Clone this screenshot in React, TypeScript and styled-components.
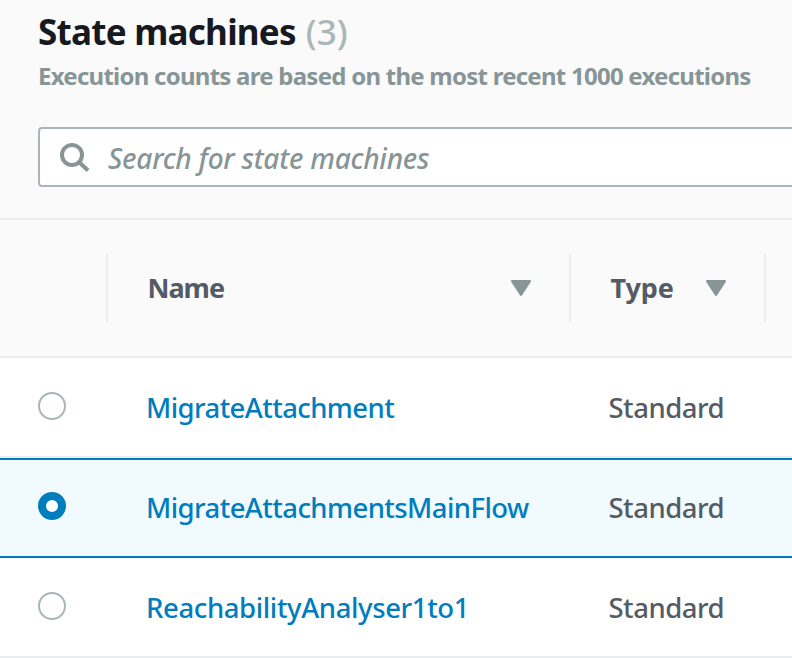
import React, { useState } from 'react';
import styled, { createGlobalStyle } from 'styled-components';

const Global = createGlobalStyle`
  *, *::before, *::after { box-sizing: border-box; }
  body {
    margin: 0;
    background: #fff;
    overflow: hidden;
    font-family: "Noto Sans", "Open Sans", sans-serif;
  }
`;

const Page = styled.main`
  width: 792px;
  height: 658px;
  overflow: hidden;
  color: #545b64;
`;

const Header = styled.header`
  height: 220px;
  padding: 9px 0 0 38px;
  background: #fafafa;
  border-bottom: 2px solid #eaeded;
`;

const Title = styled.h1`
  display: flex;
  gap: 10px;
  margin: 0;
  font-size: 35px;
  line-height: 46px;
  font-weight: 700;
  letter-spacing: -0.74px;
  color: #16191f;
  white-space: nowrap;
`;

const Count = styled.span`
  font-weight: 500;
  letter-spacing: 0;
  color: #aab7b8;
`;

const Description = styled.p`
  margin: 5px 0 0;
  font-size: 24px;
  line-height: 32px;
  font-weight: 700;
  letter-spacing: -0.75px;
  color: #879596;
  white-space: nowrap;
`;

const SearchField = styled.label`
  display: flex;
  align-items: center;
  gap: 18px;
  width: 800px;
  height: 60px;
  margin-top: 35px;
  padding: 2px 0 0 20px;
  background: #fff;
  border: 2px solid #aab7b8;
  border-radius: 4px;
`;

const SearchInput = styled.input`
  flex: 1;
  height: 54px;
  padding: 0;
  border: 0;
  outline: 0;
  background: transparent;
  font: italic 500 28px "Noto Sans", "Open Sans", sans-serif;
  letter-spacing: -0.25px;
  color: #16191f;

  &::placeholder {
    color: #879596;
    opacity: 1;
  }
`;

const columns = 'grid-template-columns: 108px 463px 195px 1fr;';

const TableHead = styled.div`
  display: grid;
  ${columns}
  align-items: center;
  height: 138px;
  background: #fafafa;
  border-bottom: 2px solid #eaeded;
`;

const HeadCell = styled.div<{ $tracking?: number }>`
  display: flex;
  align-items: center;
  justify-content: space-between;
  height: 68px;
  padding: 0 38px 0 39.5px;
  border-right: 2px solid #eaeded;
  font-size: 27px;
  line-height: 36px;
  font-weight: 700;
  letter-spacing: ${p => p.$tracking ?? 0}px;
`;

const Row = styled.div<{ $selected: boolean }>`
  display: grid;
  ${columns}
  align-items: center;
  height: 100px;
  font-size: 27.5px;
  line-height: 38px;
  font-weight: 500;
  white-space: nowrap;
  background: ${p => (p.$selected ? '#f1faff' : '#fff')};
  border-bottom: 2px solid ${p => (p.$selected ? '#007dbc' : '#eaeded')};
  box-shadow: ${p => (p.$selected ? 'inset 0 2px #007dbc' : 'none')};
`;

const Radio = styled.button<{ $checked: boolean }>`
  width: 28px;
  height: 28px;
  margin: 0 0 2px 38px;
  padding: 0;
  border: ${p => (p.$checked ? '8px solid #007dbc' : '2px solid #aab7b8')};
  border-radius: 50%;
  background: #fff;
`;

const NameLink = styled.a<{ $tracking: number }>`
  padding: 2px 0 0 38px;
  color: #007dbc;
  letter-spacing: ${p => p.$tracking}px;
  text-decoration: none;
`;

const TypeText = styled.span`
  padding: 2px 0 0 37.5px;
  letter-spacing: -0.5px;
`;

const SearchIcon = () => (
  <svg width="30" height="30" viewBox="0 0 30 30" fill="none" stroke="#879596" strokeWidth="4">
    <circle cx="12" cy="12" r="10" />
    <path d="M19 19L28 27.5" />
  </svg>
);

const SortIcon = () => (
  <svg width="20" height="16" viewBox="0 0 20 16" fill="#879596">
    <path d="M1.2 0H18.8C19.9 0 20.3 1 19.7 1.9L11.1 15.2C10.6 16.1 9.4 16.1 8.9 15.2L.3 1.9C-.3 1 .1 0 1.2 0Z" />
  </svg>
);

const machines = [
  { name: 'MigrateAttachment', type: 'Standard', tracking: -0.58 },
  { name: 'MigrateAttachmentsMainFlow', type: 'Standard', tracking: -0.57 },
  { name: 'ReachabilityAnalyser1to1', type: 'Standard', tracking: -0.38 },
];

export default function App() {
  const [selected, setSelected] = useState('MigrateAttachmentsMainFlow');
  return (
    <Page>
      <Global />
      <Header>
        <Title>State machines <Count>(3)</Count></Title>
        <Description>Execution counts are based on the most recent 1000 executions</Description>
        <SearchField>
          <SearchIcon />
          <SearchInput placeholder="Search for state machines" />
        </SearchField>
      </Header>
      <TableHead>
        <HeadCell />
        <HeadCell $tracking={-1}>Name<SortIcon /></HeadCell>
        <HeadCell $tracking={-0.1}>Type<SortIcon /></HeadCell>
      </TableHead>
      {machines.map(m => (
        <Row key={m.name} $selected={m.name === selected}>
          <Radio
            type="button"
            role="radio"
            aria-label={m.name}
            aria-checked={m.name === selected}
            $checked={m.name === selected}
            onClick={() => setSelected(m.name)}
          />
          <NameLink href="#" $tracking={m.tracking}>{m.name}</NameLink>
          <TypeText>{m.type}</TypeText>
        </Row>
      ))}
    </Page>
  );
}
